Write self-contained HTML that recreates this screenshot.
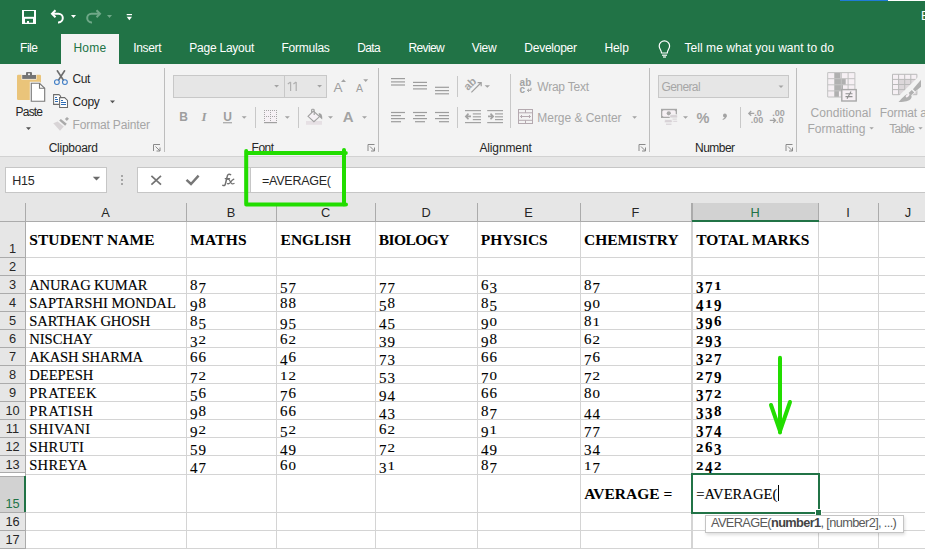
<!DOCTYPE html><html><head><meta charset="utf-8"><style>
html,body{margin:0;padding:0;width:925px;height:549px;overflow:hidden;background:#fff;position:relative}
.t{position:absolute;white-space:nowrap}
.r{position:absolute;box-sizing:content-box}
.d{display:inline-block;text-align:left}
</style></head><body>
<div class="r" style="left:0px;top:0px;width:925px;height:64px;background:#217346;"></div>
<div class="r" style="left:840px;top:0px;width:48px;height:1px;background:#1f7bd6;"></div>
<div class="r" style="left:888px;top:0px;width:37px;height:1px;background:#ffffff;"></div>
<div class="t" style="left:921.00px;top:8.84px;font-family:'Liberation Sans', sans-serif;font-size:12px;line-height:14px;color:#ffffff;font-weight:normal;">E</div>
<div class="r" style="left:61px;top:34px;width:58px;height:30px;background:#f3f3f3;"></div>
<div class="t" style="left:20.00px;top:41.34px;font-family:'Liberation Sans', sans-serif;font-size:12px;line-height:14px;color:#ffffff;font-weight:normal;letter-spacing:-0.440px;">File</div>
<div class="t" style="left:73.40px;top:41.34px;font-family:'Liberation Sans', sans-serif;font-size:12px;line-height:14px;color:#217346;font-weight:normal;letter-spacing:0.253px;">Home</div>
<div class="t" style="left:133.20px;top:41.34px;font-family:'Liberation Sans', sans-serif;font-size:12px;line-height:14px;color:#ffffff;font-weight:normal;letter-spacing:-0.320px;">Insert</div>
<div class="t" style="left:189.30px;top:41.34px;font-family:'Liberation Sans', sans-serif;font-size:12px;line-height:14px;color:#ffffff;font-weight:normal;letter-spacing:-0.238px;">Page Layout</div>
<div class="t" style="left:281.40px;top:41.34px;font-family:'Liberation Sans', sans-serif;font-size:12px;line-height:14px;color:#ffffff;font-weight:normal;letter-spacing:-0.220px;">Formulas</div>
<div class="t" style="left:357.20px;top:41.34px;font-family:'Liberation Sans', sans-serif;font-size:12px;line-height:14px;color:#ffffff;font-weight:normal;letter-spacing:-0.627px;">Data</div>
<div class="t" style="left:408.40px;top:41.34px;font-family:'Liberation Sans', sans-serif;font-size:12px;line-height:14px;color:#ffffff;font-weight:normal;letter-spacing:-0.612px;">Review</div>
<div class="t" style="left:471.70px;top:41.34px;font-family:'Liberation Sans', sans-serif;font-size:12px;line-height:14px;color:#ffffff;font-weight:normal;letter-spacing:-0.300px;">View</div>
<div class="t" style="left:524.30px;top:41.34px;font-family:'Liberation Sans', sans-serif;font-size:12px;line-height:14px;color:#ffffff;font-weight:normal;letter-spacing:-0.252px;">Developer</div>
<div class="t" style="left:604.50px;top:41.34px;font-family:'Liberation Sans', sans-serif;font-size:12px;line-height:14px;color:#ffffff;font-weight:normal;letter-spacing:-0.120px;">Help</div>
<div class="t" style="left:684.50px;top:41.34px;font-family:'Liberation Sans', sans-serif;font-size:12px;line-height:14px;color:#ffffff;font-weight:normal;letter-spacing:0.055px;">Tell me what you want to do</div>
<div class="r" style="left:0px;top:64px;width:925px;height:92px;background:#f3f3f3;"></div>
<div class="r" style="left:0px;top:156px;width:925px;height:47px;background:#e6e6e6;"></div>
<div class="r" style="left:0px;top:156px;width:925px;height:1px;background:#d2d2d2;"></div>
<div class="r" style="left:164px;top:68px;width:1px;height:84px;background:#bdbdbd;"></div>
<div class="r" style="left:378px;top:68px;width:1px;height:84px;background:#bdbdbd;"></div>
<div class="r" style="left:649px;top:68px;width:1px;height:84px;background:#bdbdbd;"></div>
<div class="r" style="left:796px;top:68px;width:1px;height:84px;background:#bdbdbd;"></div>
<div class="r" style="left:173px;top:75px;width:110px;height:21px;background:#e6e6e6;border:1px solid #c8c8c8"></div>
<div class="r" style="left:284px;top:75px;width:41px;height:21px;background:#e6e6e6;border:1px solid #c8c8c8"></div>
<div class="r" style="left:658px;top:75px;width:129px;height:21px;background:#e6e6e6;border:1px solid #c8c8c8"></div>
<div class="t" style="left:48.70px;top:140.84px;font-family:'Liberation Sans', sans-serif;font-size:12px;line-height:14px;color:#262626;font-weight:normal;letter-spacing:-0.258px;">Clipboard</div>
<div class="t" style="left:251.60px;top:140.84px;font-family:'Liberation Sans', sans-serif;font-size:12px;line-height:14px;color:#262626;font-weight:normal;letter-spacing:-0.533px;">Font</div>
<div class="t" style="left:479.40px;top:140.54px;font-family:'Liberation Sans', sans-serif;font-size:12px;line-height:14px;color:#262626;font-weight:normal;letter-spacing:-0.118px;">Alignment</div>
<div class="t" style="left:695.00px;top:140.54px;font-family:'Liberation Sans', sans-serif;font-size:12px;line-height:14px;color:#262626;font-weight:normal;letter-spacing:-0.532px;">Number</div>
<div class="t" style="left:15.60px;top:104.84px;font-family:'Liberation Sans', sans-serif;font-size:12px;line-height:14px;color:#262626;font-weight:normal;letter-spacing:-0.815px;">Paste</div>
<div class="t" style="left:72.60px;top:71.84px;font-family:'Liberation Sans', sans-serif;font-size:12px;line-height:14px;color:#262626;font-weight:normal;letter-spacing:-0.430px;">Cut</div>
<div class="t" style="left:72.60px;top:94.84px;font-family:'Liberation Sans', sans-serif;font-size:12px;line-height:14px;color:#262626;font-weight:normal;letter-spacing:-0.273px;">Copy</div>
<div class="t" style="left:72.60px;top:117.84px;font-family:'Liberation Sans', sans-serif;font-size:12px;line-height:14px;color:#a6a6a6;font-weight:normal;letter-spacing:-0.152px;">Format Painter</div>
<div class="t" style="left:537.30px;top:79.84px;font-family:'Liberation Sans', sans-serif;font-size:12px;line-height:14px;color:#a6a6a6;font-weight:normal;letter-spacing:-0.235px;">Wrap Text</div>
<div class="t" style="left:537.30px;top:110.84px;font-family:'Liberation Sans', sans-serif;font-size:12px;line-height:14px;color:#a6a6a6;font-weight:normal;letter-spacing:-0.032px;">Merge &amp; Center</div>
<div class="t" style="left:661.60px;top:79.84px;font-family:'Liberation Sans', sans-serif;font-size:12px;line-height:14px;color:#a6a6a6;font-weight:normal;letter-spacing:-0.620px;">General</div>
<div class="t" style="left:810.40px;top:106.14px;font-family:'Liberation Sans', sans-serif;font-size:12px;line-height:14px;color:#a6a6a6;font-weight:normal;letter-spacing:0.084px;">Conditional</div>
<div class="t" style="left:807.40px;top:121.84px;font-family:'Liberation Sans', sans-serif;font-size:12px;line-height:14px;color:#a6a6a6;font-weight:normal;letter-spacing:0.071px;">Formatting</div>
<div class="t" style="left:879.80px;top:106.14px;font-family:'Liberation Sans', sans-serif;font-size:12px;line-height:14px;color:#a6a6a6;font-weight:normal;letter-spacing:-0.123px;">Format a</div>
<div class="t" style="left:889.30px;top:121.84px;font-family:'Liberation Sans', sans-serif;font-size:12px;line-height:14px;color:#a6a6a6;font-weight:normal;letter-spacing:-0.770px;">Table</div>
<svg class="r" style="left:0;top:0" width="925" height="549"><path d="M290.6 82 V91 M287.8 84 L290.6 82 M296.2 82 V91 M293.4 84 L296.2 82" stroke="#b0b0b0" stroke-width="1.2" fill="none"/></svg>
<div class="r" style="left:5px;top:167px;width:100px;height:24px;background:#fff;border:1px solid #c6c6c6"></div>
<div class="t" style="left:12.20px;top:173.87px;font-family:'Liberation Sans', sans-serif;font-size:12.5px;line-height:15px;color:#262626;font-weight:normal;letter-spacing:-0.269px;">H15</div>
<div class="r" style="left:137px;top:167px;width:925px;height:24px;background:#fff;border:1px solid #c6c6c6"></div>
<div class="r" style="left:244px;top:168px;width:6px;height:24px;background:#e6e6e6;"></div>
<div class="r" style="left:250px;top:167px;width:1px;height:26px;background:#c6c6c6;"></div>
<div class="t" style="left:262.00px;top:173.67px;font-family:'Liberation Sans', sans-serif;font-size:12.5px;line-height:15px;color:#262626;font-weight:normal;letter-spacing:-0.250px;">=AVERAGE(</div>
<div class="r" style="left:0px;top:203px;width:925px;height:18px;background:#e6e6e6;"></div>
<div class="r" style="left:0px;top:221px;width:25px;height:328px;background:#e6e6e6;"></div>
<div class="r" style="left:26px;top:222px;width:899px;height:327px;background:#ffffff;"></div>
<div class="r" style="left:693px;top:203px;width:125px;height:17px;background:#d2d2d2;"></div>
<div class="r" style="left:0px;top:477px;width:24px;height:35px;background:#d2d2d2;"></div>
<div class="r" style="left:186px;top:222px;width:1px;height:327px;background:#d4d4d4;"></div>
<div class="r" style="left:276px;top:222px;width:1px;height:327px;background:#d4d4d4;"></div>
<div class="r" style="left:375px;top:222px;width:1px;height:327px;background:#d4d4d4;"></div>
<div class="r" style="left:477px;top:222px;width:1px;height:327px;background:#d4d4d4;"></div>
<div class="r" style="left:580px;top:222px;width:1px;height:327px;background:#d4d4d4;"></div>
<div class="r" style="left:692px;top:222px;width:1px;height:327px;background:#d4d4d4;"></div>
<div class="r" style="left:818px;top:222px;width:1px;height:327px;background:#d4d4d4;"></div>
<div class="r" style="left:878px;top:222px;width:1px;height:327px;background:#d4d4d4;"></div>
<div class="r" style="left:691px;top:222px;width:1px;height:327px;background:#d4d4d4;"></div>
<div class="r" style="left:26px;top:257px;width:899px;height:1px;background:#d4d4d4;"></div>
<div class="r" style="left:26px;top:275px;width:899px;height:1px;background:#d4d4d4;"></div>
<div class="r" style="left:26px;top:293px;width:899px;height:1px;background:#d4d4d4;"></div>
<div class="r" style="left:26px;top:311px;width:899px;height:1px;background:#d4d4d4;"></div>
<div class="r" style="left:26px;top:329px;width:899px;height:1px;background:#d4d4d4;"></div>
<div class="r" style="left:26px;top:347px;width:899px;height:1px;background:#d4d4d4;"></div>
<div class="r" style="left:26px;top:365px;width:899px;height:1px;background:#d4d4d4;"></div>
<div class="r" style="left:26px;top:383px;width:899px;height:1px;background:#d4d4d4;"></div>
<div class="r" style="left:26px;top:401px;width:899px;height:1px;background:#d4d4d4;"></div>
<div class="r" style="left:26px;top:419px;width:899px;height:1px;background:#d4d4d4;"></div>
<div class="r" style="left:26px;top:437px;width:899px;height:1px;background:#d4d4d4;"></div>
<div class="r" style="left:26px;top:455px;width:899px;height:1px;background:#d4d4d4;"></div>
<div class="r" style="left:26px;top:474px;width:899px;height:1px;background:#d4d4d4;"></div>
<div class="r" style="left:26px;top:512px;width:899px;height:1px;background:#d4d4d4;"></div>
<div class="r" style="left:26px;top:530px;width:899px;height:1px;background:#d4d4d4;"></div>
<div class="r" style="left:26px;top:548px;width:899px;height:1px;background:#d4d4d4;"></div>
<div class="r" style="left:25px;top:203px;width:1px;height:18px;background:#ababab;"></div>
<div class="r" style="left:186px;top:203px;width:1px;height:18px;background:#ababab;"></div>
<div class="r" style="left:276px;top:203px;width:1px;height:18px;background:#ababab;"></div>
<div class="r" style="left:375px;top:203px;width:1px;height:18px;background:#ababab;"></div>
<div class="r" style="left:477px;top:203px;width:1px;height:18px;background:#ababab;"></div>
<div class="r" style="left:580px;top:203px;width:1px;height:18px;background:#ababab;"></div>
<div class="r" style="left:692px;top:203px;width:1px;height:18px;background:#ababab;"></div>
<div class="r" style="left:818px;top:203px;width:1px;height:18px;background:#ababab;"></div>
<div class="r" style="left:878px;top:203px;width:1px;height:18px;background:#ababab;"></div>
<div class="r" style="left:691px;top:203px;width:1px;height:18px;background:#ababab;"></div>
<div class="r" style="left:0px;top:221px;width:925px;height:1px;background:#ababab;"></div>
<div class="r" style="left:25px;top:221px;width:1px;height:328px;background:#ababab;"></div>
<div class="r" style="left:0px;top:257px;width:25px;height:1px;background:#ababab;"></div>
<div class="r" style="left:0px;top:275px;width:25px;height:1px;background:#ababab;"></div>
<div class="r" style="left:0px;top:293px;width:25px;height:1px;background:#ababab;"></div>
<div class="r" style="left:0px;top:311px;width:25px;height:1px;background:#ababab;"></div>
<div class="r" style="left:0px;top:329px;width:25px;height:1px;background:#ababab;"></div>
<div class="r" style="left:0px;top:347px;width:25px;height:1px;background:#ababab;"></div>
<div class="r" style="left:0px;top:365px;width:25px;height:1px;background:#ababab;"></div>
<div class="r" style="left:0px;top:383px;width:25px;height:1px;background:#ababab;"></div>
<div class="r" style="left:0px;top:401px;width:25px;height:1px;background:#ababab;"></div>
<div class="r" style="left:0px;top:419px;width:25px;height:1px;background:#ababab;"></div>
<div class="r" style="left:0px;top:437px;width:25px;height:1px;background:#ababab;"></div>
<div class="r" style="left:0px;top:455px;width:25px;height:1px;background:#ababab;"></div>
<div class="r" style="left:0px;top:472px;width:25px;height:1px;background:#ababab;"></div>
<div class="r" style="left:0px;top:473px;width:25px;height:3px;background:#ffffff;"></div>
<div class="r" style="left:0px;top:476px;width:25px;height:1px;background:#ababab;"></div>
<div class="r" style="left:0px;top:512px;width:25px;height:1px;background:#ababab;"></div>
<div class="r" style="left:0px;top:530px;width:25px;height:1px;background:#ababab;"></div>
<div class="r" style="left:0px;top:548px;width:25px;height:1px;background:#ababab;"></div>
<div class="r" style="left:24px;top:476px;width:2px;height:36px;background:#217346;"></div>
<div class="r" style="left:692px;top:220px;width:127px;height:2px;background:#217346;"></div>
<div class="t" style="left:25.00px;top:205.06px;font-family:'Liberation Sans', sans-serif;font-size:12.8px;line-height:15px;color:#262626;font-weight:normal;"><span style="display:inline-block;width:161px;text-align:center">A</span></div>
<div class="t" style="left:186.00px;top:205.06px;font-family:'Liberation Sans', sans-serif;font-size:12.8px;line-height:15px;color:#262626;font-weight:normal;"><span style="display:inline-block;width:90px;text-align:center">B</span></div>
<div class="t" style="left:276.00px;top:205.06px;font-family:'Liberation Sans', sans-serif;font-size:12.8px;line-height:15px;color:#262626;font-weight:normal;"><span style="display:inline-block;width:99px;text-align:center">C</span></div>
<div class="t" style="left:375.00px;top:205.06px;font-family:'Liberation Sans', sans-serif;font-size:12.8px;line-height:15px;color:#262626;font-weight:normal;"><span style="display:inline-block;width:102px;text-align:center">D</span></div>
<div class="t" style="left:477.00px;top:205.06px;font-family:'Liberation Sans', sans-serif;font-size:12.8px;line-height:15px;color:#262626;font-weight:normal;"><span style="display:inline-block;width:103px;text-align:center">E</span></div>
<div class="t" style="left:580.00px;top:205.06px;font-family:'Liberation Sans', sans-serif;font-size:12.8px;line-height:15px;color:#262626;font-weight:normal;"><span style="display:inline-block;width:111px;text-align:center">F</span></div>
<div class="t" style="left:692.00px;top:205.06px;font-family:'Liberation Sans', sans-serif;font-size:12.8px;line-height:15px;color:#217346;font-weight:normal;"><span style="display:inline-block;width:126px;text-align:center">H</span></div>
<div class="t" style="left:818.00px;top:205.06px;font-family:'Liberation Sans', sans-serif;font-size:12.8px;line-height:15px;color:#262626;font-weight:normal;"><span style="display:inline-block;width:60px;text-align:center">I</span></div>
<div class="t" style="left:878.00px;top:205.06px;font-family:'Liberation Sans', sans-serif;font-size:12.8px;line-height:15px;color:#262626;font-weight:normal;"><span style="display:inline-block;width:60px;text-align:center">J</span></div>
<div class="t" style="left:0.00px;top:241.06px;font-family:'Liberation Sans', sans-serif;font-size:12.8px;line-height:15px;color:#262626;font-weight:normal;"><span style="display:inline-block;width:25px;text-align:center">1</span></div>
<div class="t" style="left:0.00px;top:259.06px;font-family:'Liberation Sans', sans-serif;font-size:12.8px;line-height:15px;color:#262626;font-weight:normal;"><span style="display:inline-block;width:25px;text-align:center">2</span></div>
<div class="t" style="left:0.00px;top:277.06px;font-family:'Liberation Sans', sans-serif;font-size:12.8px;line-height:15px;color:#262626;font-weight:normal;"><span style="display:inline-block;width:25px;text-align:center">3</span></div>
<div class="t" style="left:0.00px;top:295.06px;font-family:'Liberation Sans', sans-serif;font-size:12.8px;line-height:15px;color:#262626;font-weight:normal;"><span style="display:inline-block;width:25px;text-align:center">4</span></div>
<div class="t" style="left:0.00px;top:313.06px;font-family:'Liberation Sans', sans-serif;font-size:12.8px;line-height:15px;color:#262626;font-weight:normal;"><span style="display:inline-block;width:25px;text-align:center">5</span></div>
<div class="t" style="left:0.00px;top:331.06px;font-family:'Liberation Sans', sans-serif;font-size:12.8px;line-height:15px;color:#262626;font-weight:normal;"><span style="display:inline-block;width:25px;text-align:center">6</span></div>
<div class="t" style="left:0.00px;top:349.06px;font-family:'Liberation Sans', sans-serif;font-size:12.8px;line-height:15px;color:#262626;font-weight:normal;"><span style="display:inline-block;width:25px;text-align:center">7</span></div>
<div class="t" style="left:0.00px;top:367.06px;font-family:'Liberation Sans', sans-serif;font-size:12.8px;line-height:15px;color:#262626;font-weight:normal;"><span style="display:inline-block;width:25px;text-align:center">8</span></div>
<div class="t" style="left:0.00px;top:385.06px;font-family:'Liberation Sans', sans-serif;font-size:12.8px;line-height:15px;color:#262626;font-weight:normal;"><span style="display:inline-block;width:25px;text-align:center">9</span></div>
<div class="t" style="left:0.00px;top:403.06px;font-family:'Liberation Sans', sans-serif;font-size:12.8px;line-height:15px;color:#262626;font-weight:normal;"><span style="display:inline-block;width:25px;text-align:center">10</span></div>
<div class="t" style="left:0.00px;top:421.06px;font-family:'Liberation Sans', sans-serif;font-size:12.8px;line-height:15px;color:#262626;font-weight:normal;"><span style="display:inline-block;width:25px;text-align:center">11</span></div>
<div class="t" style="left:0.00px;top:439.06px;font-family:'Liberation Sans', sans-serif;font-size:12.8px;line-height:15px;color:#262626;font-weight:normal;"><span style="display:inline-block;width:25px;text-align:center">12</span></div>
<div class="t" style="left:0.00px;top:457.06px;font-family:'Liberation Sans', sans-serif;font-size:12.8px;line-height:15px;color:#262626;font-weight:normal;"><span style="display:inline-block;width:25px;text-align:center">13</span></div>
<div class="t" style="left:0.00px;top:496.06px;font-family:'Liberation Sans', sans-serif;font-size:12.8px;line-height:15px;color:#217346;font-weight:normal;"><span style="display:inline-block;width:25px;text-align:center">15</span></div>
<div class="t" style="left:0.00px;top:514.06px;font-family:'Liberation Sans', sans-serif;font-size:12.8px;line-height:15px;color:#262626;font-weight:normal;"><span style="display:inline-block;width:25px;text-align:center">16</span></div>
<div class="t" style="left:0.00px;top:532.06px;font-family:'Liberation Sans', sans-serif;font-size:12.8px;line-height:15px;color:#262626;font-weight:normal;"><span style="display:inline-block;width:25px;text-align:center">17</span></div>
<div class="t" style="left:29.20px;top:230.47px;font-family:'Liberation Serif', serif;font-size:15.5px;line-height:19px;color:#000;font-weight:bold;letter-spacing:0.113px;">STUDENT NAME</div>
<div class="t" style="left:190.30px;top:230.47px;font-family:'Liberation Serif', serif;font-size:15.5px;line-height:19px;color:#000;font-weight:bold;letter-spacing:0.169px;">MATHS</div>
<div class="t" style="left:280.60px;top:230.47px;font-family:'Liberation Serif', serif;font-size:15.5px;line-height:19px;color:#000;font-weight:bold;letter-spacing:-0.034px;">ENGLISH</div>
<div class="t" style="left:378.70px;top:230.47px;font-family:'Liberation Serif', serif;font-size:15.5px;line-height:19px;color:#000;font-weight:bold;letter-spacing:-0.565px;">BIOLOGY</div>
<div class="t" style="left:480.80px;top:230.47px;font-family:'Liberation Serif', serif;font-size:15.5px;line-height:19px;color:#000;font-weight:bold;letter-spacing:-0.049px;">PHYSICS</div>
<div class="t" style="left:584.10px;top:230.47px;font-family:'Liberation Serif', serif;font-size:15.5px;line-height:19px;color:#000;font-weight:bold;letter-spacing:-0.064px;">CHEMISTRY</div>
<div class="t" style="left:696.30px;top:230.47px;font-family:'Liberation Serif', serif;font-size:15.5px;line-height:19px;color:#000;font-weight:bold;letter-spacing:-0.054px;">TOTAL MARKS</div>
<div class="t" style="left:29.20px;top:275.57px;font-family:'Liberation Serif', serif;font-size:14.6px;line-height:18px;color:#000;font-weight:normal;letter-spacing:-0.184px;-webkit-text-stroke:0.12px #000">ANURAG KUMAR</div>
<div class="t" style="left:190px;top:276.24px;font-family:'Liberation Serif', serif;font-size:15.0px;line-height:18px;color:#000;font-weight:normal;-webkit-text-stroke:0.12px #000"><span class="d" style="width:8.5px;transform:none;transform-origin:50% 14.06px">8</span><span class="d" style="width:8.5px;transform:translateY(3px) scaleY(1.0);transform-origin:50% 14.06px">7</span></div>
<div class="t" style="left:280px;top:276.24px;font-family:'Liberation Serif', serif;font-size:15.0px;line-height:18px;color:#000;font-weight:normal;-webkit-text-stroke:0.12px #000"><span class="d" style="width:8.5px;transform:translateY(3px) scaleY(1.0);transform-origin:50% 14.06px">5</span><span class="d" style="width:8.5px;transform:translateY(3px) scaleY(1.0);transform-origin:50% 14.06px">7</span></div>
<div class="t" style="left:379px;top:276.24px;font-family:'Liberation Serif', serif;font-size:15.0px;line-height:18px;color:#000;font-weight:normal;-webkit-text-stroke:0.12px #000"><span class="d" style="width:8.5px;transform:translateY(3px) scaleY(1.0);transform-origin:50% 14.06px">7</span><span class="d" style="width:8.5px;transform:translateY(3px) scaleY(1.0);transform-origin:50% 14.06px">7</span></div>
<div class="t" style="left:481px;top:276.24px;font-family:'Liberation Serif', serif;font-size:15.0px;line-height:18px;color:#000;font-weight:normal;-webkit-text-stroke:0.12px #000"><span class="d" style="width:8.5px;transform:none;transform-origin:50% 14.06px">6</span><span class="d" style="width:8.5px;transform:translateY(3px) scaleY(1.0);transform-origin:50% 14.06px">3</span></div>
<div class="t" style="left:584px;top:276.24px;font-family:'Liberation Serif', serif;font-size:15.0px;line-height:18px;color:#000;font-weight:normal;-webkit-text-stroke:0.12px #000"><span class="d" style="width:8.5px;transform:none;transform-origin:50% 14.06px">8</span><span class="d" style="width:8.5px;transform:translateY(3px) scaleY(1.0);transform-origin:50% 14.06px">7</span></div>
<div class="t" style="left:696px;top:276.24px;font-family:'Liberation Serif', serif;font-size:15.0px;line-height:18px;color:#000;font-weight:bold;"><span class="d" style="width:9.0px;transform:translateY(3px) scaleY(1.09);transform-origin:50% 14.06px">3</span><span class="d" style="width:9.0px;transform:translateY(3px) scaleY(1.09);transform-origin:50% 14.06px">7</span><span class="d" style="width:9.0px;transform:scaleY(0.8);transform-origin:50% 14.06px">1</span></div>
<div class="t" style="left:29.20px;top:293.57px;font-family:'Liberation Serif', serif;font-size:14.6px;line-height:18px;color:#000;font-weight:normal;letter-spacing:0.042px;-webkit-text-stroke:0.12px #000">SAPTARSHI MONDAL</div>
<div class="t" style="left:190px;top:294.24px;font-family:'Liberation Serif', serif;font-size:15.0px;line-height:18px;color:#000;font-weight:normal;-webkit-text-stroke:0.12px #000"><span class="d" style="width:8.5px;transform:translateY(3px) scaleY(1.0);transform-origin:50% 14.06px">9</span><span class="d" style="width:8.5px;transform:none;transform-origin:50% 14.06px">8</span></div>
<div class="t" style="left:280px;top:294.24px;font-family:'Liberation Serif', serif;font-size:15.0px;line-height:18px;color:#000;font-weight:normal;-webkit-text-stroke:0.12px #000"><span class="d" style="width:8.5px;transform:none;transform-origin:50% 14.06px">8</span><span class="d" style="width:8.5px;transform:none;transform-origin:50% 14.06px">8</span></div>
<div class="t" style="left:379px;top:294.24px;font-family:'Liberation Serif', serif;font-size:15.0px;line-height:18px;color:#000;font-weight:normal;-webkit-text-stroke:0.12px #000"><span class="d" style="width:8.5px;transform:translateY(3px) scaleY(1.0);transform-origin:50% 14.06px">5</span><span class="d" style="width:8.5px;transform:none;transform-origin:50% 14.06px">8</span></div>
<div class="t" style="left:481px;top:294.24px;font-family:'Liberation Serif', serif;font-size:15.0px;line-height:18px;color:#000;font-weight:normal;-webkit-text-stroke:0.12px #000"><span class="d" style="width:8.5px;transform:none;transform-origin:50% 14.06px">8</span><span class="d" style="width:8.5px;transform:translateY(3px) scaleY(1.0);transform-origin:50% 14.06px">5</span></div>
<div class="t" style="left:584px;top:294.24px;font-family:'Liberation Serif', serif;font-size:15.0px;line-height:18px;color:#000;font-weight:normal;-webkit-text-stroke:0.12px #000"><span class="d" style="width:8.5px;transform:translateY(3px) scaleY(1.0);transform-origin:50% 14.06px">9</span><span class="d" style="width:8.5px;transform:scaleY(0.8);transform-origin:50% 14.06px">0</span></div>
<div class="t" style="left:696px;top:294.24px;font-family:'Liberation Serif', serif;font-size:15.0px;line-height:18px;color:#000;font-weight:bold;"><span class="d" style="width:9.0px;transform:translateY(3px) scaleY(1.09);transform-origin:50% 14.06px">4</span><span class="d" style="width:9.0px;transform:scaleY(0.8);transform-origin:50% 14.06px">1</span><span class="d" style="width:9.0px;transform:translateY(3px) scaleY(1.09);transform-origin:50% 14.06px">9</span></div>
<div class="t" style="left:29.20px;top:311.57px;font-family:'Liberation Serif', serif;font-size:14.6px;line-height:18px;color:#000;font-weight:normal;letter-spacing:-0.063px;-webkit-text-stroke:0.12px #000">SARTHAK GHOSH</div>
<div class="t" style="left:190px;top:312.24px;font-family:'Liberation Serif', serif;font-size:15.0px;line-height:18px;color:#000;font-weight:normal;-webkit-text-stroke:0.12px #000"><span class="d" style="width:8.5px;transform:none;transform-origin:50% 14.06px">8</span><span class="d" style="width:8.5px;transform:translateY(3px) scaleY(1.0);transform-origin:50% 14.06px">5</span></div>
<div class="t" style="left:280px;top:312.24px;font-family:'Liberation Serif', serif;font-size:15.0px;line-height:18px;color:#000;font-weight:normal;-webkit-text-stroke:0.12px #000"><span class="d" style="width:8.5px;transform:translateY(3px) scaleY(1.0);transform-origin:50% 14.06px">9</span><span class="d" style="width:8.5px;transform:translateY(3px) scaleY(1.0);transform-origin:50% 14.06px">5</span></div>
<div class="t" style="left:379px;top:312.24px;font-family:'Liberation Serif', serif;font-size:15.0px;line-height:18px;color:#000;font-weight:normal;-webkit-text-stroke:0.12px #000"><span class="d" style="width:8.5px;transform:translateY(3px) scaleY(1.0);transform-origin:50% 14.06px">4</span><span class="d" style="width:8.5px;transform:translateY(3px) scaleY(1.0);transform-origin:50% 14.06px">5</span></div>
<div class="t" style="left:481px;top:312.24px;font-family:'Liberation Serif', serif;font-size:15.0px;line-height:18px;color:#000;font-weight:normal;-webkit-text-stroke:0.12px #000"><span class="d" style="width:8.5px;transform:translateY(3px) scaleY(1.0);transform-origin:50% 14.06px">9</span><span class="d" style="width:8.5px;transform:scaleY(0.8);transform-origin:50% 14.06px">0</span></div>
<div class="t" style="left:584px;top:312.24px;font-family:'Liberation Serif', serif;font-size:15.0px;line-height:18px;color:#000;font-weight:normal;-webkit-text-stroke:0.12px #000"><span class="d" style="width:8.5px;transform:none;transform-origin:50% 14.06px">8</span><span class="d" style="width:8.5px;transform:scaleY(0.8);transform-origin:50% 14.06px">1</span></div>
<div class="t" style="left:696px;top:312.24px;font-family:'Liberation Serif', serif;font-size:15.0px;line-height:18px;color:#000;font-weight:bold;"><span class="d" style="width:9.0px;transform:translateY(3px) scaleY(1.09);transform-origin:50% 14.06px">3</span><span class="d" style="width:9.0px;transform:translateY(3px) scaleY(1.09);transform-origin:50% 14.06px">9</span><span class="d" style="width:9.0px;transform:none;transform-origin:50% 14.06px">6</span></div>
<div class="t" style="left:29.20px;top:329.57px;font-family:'Liberation Serif', serif;font-size:14.6px;line-height:18px;color:#000;font-weight:normal;letter-spacing:0.003px;-webkit-text-stroke:0.12px #000">NISCHAY</div>
<div class="t" style="left:190px;top:330.24px;font-family:'Liberation Serif', serif;font-size:15.0px;line-height:18px;color:#000;font-weight:normal;-webkit-text-stroke:0.12px #000"><span class="d" style="width:8.5px;transform:translateY(3px) scaleY(1.0);transform-origin:50% 14.06px">3</span><span class="d" style="width:8.5px;transform:scaleY(0.8);transform-origin:50% 14.06px">2</span></div>
<div class="t" style="left:280px;top:330.24px;font-family:'Liberation Serif', serif;font-size:15.0px;line-height:18px;color:#000;font-weight:normal;-webkit-text-stroke:0.12px #000"><span class="d" style="width:8.5px;transform:none;transform-origin:50% 14.06px">6</span><span class="d" style="width:8.5px;transform:scaleY(0.8);transform-origin:50% 14.06px">2</span></div>
<div class="t" style="left:379px;top:330.24px;font-family:'Liberation Serif', serif;font-size:15.0px;line-height:18px;color:#000;font-weight:normal;-webkit-text-stroke:0.12px #000"><span class="d" style="width:8.5px;transform:translateY(3px) scaleY(1.0);transform-origin:50% 14.06px">3</span><span class="d" style="width:8.5px;transform:translateY(3px) scaleY(1.0);transform-origin:50% 14.06px">9</span></div>
<div class="t" style="left:481px;top:330.24px;font-family:'Liberation Serif', serif;font-size:15.0px;line-height:18px;color:#000;font-weight:normal;-webkit-text-stroke:0.12px #000"><span class="d" style="width:8.5px;transform:translateY(3px) scaleY(1.0);transform-origin:50% 14.06px">9</span><span class="d" style="width:8.5px;transform:none;transform-origin:50% 14.06px">8</span></div>
<div class="t" style="left:584px;top:330.24px;font-family:'Liberation Serif', serif;font-size:15.0px;line-height:18px;color:#000;font-weight:normal;-webkit-text-stroke:0.12px #000"><span class="d" style="width:8.5px;transform:none;transform-origin:50% 14.06px">6</span><span class="d" style="width:8.5px;transform:scaleY(0.8);transform-origin:50% 14.06px">2</span></div>
<div class="t" style="left:696px;top:330.24px;font-family:'Liberation Serif', serif;font-size:15.0px;line-height:18px;color:#000;font-weight:bold;"><span class="d" style="width:9.0px;transform:scaleY(0.8);transform-origin:50% 14.06px">2</span><span class="d" style="width:9.0px;transform:translateY(3px) scaleY(1.09);transform-origin:50% 14.06px">9</span><span class="d" style="width:9.0px;transform:translateY(3px) scaleY(1.09);transform-origin:50% 14.06px">3</span></div>
<div class="t" style="left:29.20px;top:347.57px;font-family:'Liberation Serif', serif;font-size:14.6px;line-height:18px;color:#000;font-weight:normal;letter-spacing:-0.230px;-webkit-text-stroke:0.12px #000">AKASH SHARMA</div>
<div class="t" style="left:190px;top:348.24px;font-family:'Liberation Serif', serif;font-size:15.0px;line-height:18px;color:#000;font-weight:normal;-webkit-text-stroke:0.12px #000"><span class="d" style="width:8.5px;transform:none;transform-origin:50% 14.06px">6</span><span class="d" style="width:8.5px;transform:none;transform-origin:50% 14.06px">6</span></div>
<div class="t" style="left:280px;top:348.24px;font-family:'Liberation Serif', serif;font-size:15.0px;line-height:18px;color:#000;font-weight:normal;-webkit-text-stroke:0.12px #000"><span class="d" style="width:8.5px;transform:translateY(3px) scaleY(1.0);transform-origin:50% 14.06px">4</span><span class="d" style="width:8.5px;transform:none;transform-origin:50% 14.06px">6</span></div>
<div class="t" style="left:379px;top:348.24px;font-family:'Liberation Serif', serif;font-size:15.0px;line-height:18px;color:#000;font-weight:normal;-webkit-text-stroke:0.12px #000"><span class="d" style="width:8.5px;transform:translateY(3px) scaleY(1.0);transform-origin:50% 14.06px">7</span><span class="d" style="width:8.5px;transform:translateY(3px) scaleY(1.0);transform-origin:50% 14.06px">3</span></div>
<div class="t" style="left:481px;top:348.24px;font-family:'Liberation Serif', serif;font-size:15.0px;line-height:18px;color:#000;font-weight:normal;-webkit-text-stroke:0.12px #000"><span class="d" style="width:8.5px;transform:none;transform-origin:50% 14.06px">6</span><span class="d" style="width:8.5px;transform:none;transform-origin:50% 14.06px">6</span></div>
<div class="t" style="left:584px;top:348.24px;font-family:'Liberation Serif', serif;font-size:15.0px;line-height:18px;color:#000;font-weight:normal;-webkit-text-stroke:0.12px #000"><span class="d" style="width:8.5px;transform:translateY(3px) scaleY(1.0);transform-origin:50% 14.06px">7</span><span class="d" style="width:8.5px;transform:none;transform-origin:50% 14.06px">6</span></div>
<div class="t" style="left:696px;top:348.24px;font-family:'Liberation Serif', serif;font-size:15.0px;line-height:18px;color:#000;font-weight:bold;"><span class="d" style="width:9.0px;transform:translateY(3px) scaleY(1.09);transform-origin:50% 14.06px">3</span><span class="d" style="width:9.0px;transform:scaleY(0.8);transform-origin:50% 14.06px">2</span><span class="d" style="width:9.0px;transform:translateY(3px) scaleY(1.09);transform-origin:50% 14.06px">7</span></div>
<div class="t" style="left:29.20px;top:365.57px;font-family:'Liberation Serif', serif;font-size:14.6px;line-height:18px;color:#000;font-weight:normal;letter-spacing:0.018px;-webkit-text-stroke:0.12px #000">DEEPESH</div>
<div class="t" style="left:190px;top:366.24px;font-family:'Liberation Serif', serif;font-size:15.0px;line-height:18px;color:#000;font-weight:normal;-webkit-text-stroke:0.12px #000"><span class="d" style="width:8.5px;transform:translateY(3px) scaleY(1.0);transform-origin:50% 14.06px">7</span><span class="d" style="width:8.5px;transform:scaleY(0.8);transform-origin:50% 14.06px">2</span></div>
<div class="t" style="left:280px;top:366.24px;font-family:'Liberation Serif', serif;font-size:15.0px;line-height:18px;color:#000;font-weight:normal;-webkit-text-stroke:0.12px #000"><span class="d" style="width:8.5px;transform:scaleY(0.8);transform-origin:50% 14.06px">1</span><span class="d" style="width:8.5px;transform:scaleY(0.8);transform-origin:50% 14.06px">2</span></div>
<div class="t" style="left:379px;top:366.24px;font-family:'Liberation Serif', serif;font-size:15.0px;line-height:18px;color:#000;font-weight:normal;-webkit-text-stroke:0.12px #000"><span class="d" style="width:8.5px;transform:translateY(3px) scaleY(1.0);transform-origin:50% 14.06px">5</span><span class="d" style="width:8.5px;transform:translateY(3px) scaleY(1.0);transform-origin:50% 14.06px">3</span></div>
<div class="t" style="left:481px;top:366.24px;font-family:'Liberation Serif', serif;font-size:15.0px;line-height:18px;color:#000;font-weight:normal;-webkit-text-stroke:0.12px #000"><span class="d" style="width:8.5px;transform:translateY(3px) scaleY(1.0);transform-origin:50% 14.06px">7</span><span class="d" style="width:8.5px;transform:scaleY(0.8);transform-origin:50% 14.06px">0</span></div>
<div class="t" style="left:584px;top:366.24px;font-family:'Liberation Serif', serif;font-size:15.0px;line-height:18px;color:#000;font-weight:normal;-webkit-text-stroke:0.12px #000"><span class="d" style="width:8.5px;transform:translateY(3px) scaleY(1.0);transform-origin:50% 14.06px">7</span><span class="d" style="width:8.5px;transform:scaleY(0.8);transform-origin:50% 14.06px">2</span></div>
<div class="t" style="left:696px;top:366.24px;font-family:'Liberation Serif', serif;font-size:15.0px;line-height:18px;color:#000;font-weight:bold;"><span class="d" style="width:9.0px;transform:scaleY(0.8);transform-origin:50% 14.06px">2</span><span class="d" style="width:9.0px;transform:translateY(3px) scaleY(1.09);transform-origin:50% 14.06px">7</span><span class="d" style="width:9.0px;transform:translateY(3px) scaleY(1.09);transform-origin:50% 14.06px">9</span></div>
<div class="t" style="left:29.20px;top:383.57px;font-family:'Liberation Serif', serif;font-size:14.6px;line-height:18px;color:#000;font-weight:normal;letter-spacing:0.551px;-webkit-text-stroke:0.12px #000">PRATEEK</div>
<div class="t" style="left:190px;top:384.24px;font-family:'Liberation Serif', serif;font-size:15.0px;line-height:18px;color:#000;font-weight:normal;-webkit-text-stroke:0.12px #000"><span class="d" style="width:8.5px;transform:translateY(3px) scaleY(1.0);transform-origin:50% 14.06px">5</span><span class="d" style="width:8.5px;transform:none;transform-origin:50% 14.06px">6</span></div>
<div class="t" style="left:280px;top:384.24px;font-family:'Liberation Serif', serif;font-size:15.0px;line-height:18px;color:#000;font-weight:normal;-webkit-text-stroke:0.12px #000"><span class="d" style="width:8.5px;transform:translateY(3px) scaleY(1.0);transform-origin:50% 14.06px">7</span><span class="d" style="width:8.5px;transform:none;transform-origin:50% 14.06px">6</span></div>
<div class="t" style="left:379px;top:384.24px;font-family:'Liberation Serif', serif;font-size:15.0px;line-height:18px;color:#000;font-weight:normal;-webkit-text-stroke:0.12px #000"><span class="d" style="width:8.5px;transform:translateY(3px) scaleY(1.0);transform-origin:50% 14.06px">9</span><span class="d" style="width:8.5px;transform:translateY(3px) scaleY(1.0);transform-origin:50% 14.06px">4</span></div>
<div class="t" style="left:481px;top:384.24px;font-family:'Liberation Serif', serif;font-size:15.0px;line-height:18px;color:#000;font-weight:normal;-webkit-text-stroke:0.12px #000"><span class="d" style="width:8.5px;transform:none;transform-origin:50% 14.06px">6</span><span class="d" style="width:8.5px;transform:none;transform-origin:50% 14.06px">6</span></div>
<div class="t" style="left:584px;top:384.24px;font-family:'Liberation Serif', serif;font-size:15.0px;line-height:18px;color:#000;font-weight:normal;-webkit-text-stroke:0.12px #000"><span class="d" style="width:8.5px;transform:none;transform-origin:50% 14.06px">8</span><span class="d" style="width:8.5px;transform:scaleY(0.8);transform-origin:50% 14.06px">0</span></div>
<div class="t" style="left:696px;top:384.24px;font-family:'Liberation Serif', serif;font-size:15.0px;line-height:18px;color:#000;font-weight:bold;"><span class="d" style="width:9.0px;transform:translateY(3px) scaleY(1.09);transform-origin:50% 14.06px">3</span><span class="d" style="width:9.0px;transform:translateY(3px) scaleY(1.09);transform-origin:50% 14.06px">7</span><span class="d" style="width:9.0px;transform:scaleY(0.8);transform-origin:50% 14.06px">2</span></div>
<div class="t" style="left:29.20px;top:401.57px;font-family:'Liberation Serif', serif;font-size:14.6px;line-height:18px;color:#000;font-weight:normal;letter-spacing:0.733px;-webkit-text-stroke:0.12px #000">PRATISH</div>
<div class="t" style="left:190px;top:402.24px;font-family:'Liberation Serif', serif;font-size:15.0px;line-height:18px;color:#000;font-weight:normal;-webkit-text-stroke:0.12px #000"><span class="d" style="width:8.5px;transform:translateY(3px) scaleY(1.0);transform-origin:50% 14.06px">9</span><span class="d" style="width:8.5px;transform:none;transform-origin:50% 14.06px">8</span></div>
<div class="t" style="left:280px;top:402.24px;font-family:'Liberation Serif', serif;font-size:15.0px;line-height:18px;color:#000;font-weight:normal;-webkit-text-stroke:0.12px #000"><span class="d" style="width:8.5px;transform:none;transform-origin:50% 14.06px">6</span><span class="d" style="width:8.5px;transform:none;transform-origin:50% 14.06px">6</span></div>
<div class="t" style="left:379px;top:402.24px;font-family:'Liberation Serif', serif;font-size:15.0px;line-height:18px;color:#000;font-weight:normal;-webkit-text-stroke:0.12px #000"><span class="d" style="width:8.5px;transform:translateY(3px) scaleY(1.0);transform-origin:50% 14.06px">4</span><span class="d" style="width:8.5px;transform:translateY(3px) scaleY(1.0);transform-origin:50% 14.06px">3</span></div>
<div class="t" style="left:481px;top:402.24px;font-family:'Liberation Serif', serif;font-size:15.0px;line-height:18px;color:#000;font-weight:normal;-webkit-text-stroke:0.12px #000"><span class="d" style="width:8.5px;transform:none;transform-origin:50% 14.06px">8</span><span class="d" style="width:8.5px;transform:translateY(3px) scaleY(1.0);transform-origin:50% 14.06px">7</span></div>
<div class="t" style="left:584px;top:402.24px;font-family:'Liberation Serif', serif;font-size:15.0px;line-height:18px;color:#000;font-weight:normal;-webkit-text-stroke:0.12px #000"><span class="d" style="width:8.5px;transform:translateY(3px) scaleY(1.0);transform-origin:50% 14.06px">4</span><span class="d" style="width:8.5px;transform:translateY(3px) scaleY(1.0);transform-origin:50% 14.06px">4</span></div>
<div class="t" style="left:696px;top:402.24px;font-family:'Liberation Serif', serif;font-size:15.0px;line-height:18px;color:#000;font-weight:bold;"><span class="d" style="width:9.0px;transform:translateY(3px) scaleY(1.09);transform-origin:50% 14.06px">3</span><span class="d" style="width:9.0px;transform:translateY(3px) scaleY(1.09);transform-origin:50% 14.06px">3</span><span class="d" style="width:9.0px;transform:none;transform-origin:50% 14.06px">8</span></div>
<div class="t" style="left:29.20px;top:419.57px;font-family:'Liberation Serif', serif;font-size:14.6px;line-height:18px;color:#000;font-weight:normal;letter-spacing:0.465px;-webkit-text-stroke:0.12px #000">SHIVANI</div>
<div class="t" style="left:190px;top:420.24px;font-family:'Liberation Serif', serif;font-size:15.0px;line-height:18px;color:#000;font-weight:normal;-webkit-text-stroke:0.12px #000"><span class="d" style="width:8.5px;transform:translateY(3px) scaleY(1.0);transform-origin:50% 14.06px">9</span><span class="d" style="width:8.5px;transform:scaleY(0.8);transform-origin:50% 14.06px">2</span></div>
<div class="t" style="left:280px;top:420.24px;font-family:'Liberation Serif', serif;font-size:15.0px;line-height:18px;color:#000;font-weight:normal;-webkit-text-stroke:0.12px #000"><span class="d" style="width:8.5px;transform:translateY(3px) scaleY(1.0);transform-origin:50% 14.06px">5</span><span class="d" style="width:8.5px;transform:scaleY(0.8);transform-origin:50% 14.06px">2</span></div>
<div class="t" style="left:379px;top:420.24px;font-family:'Liberation Serif', serif;font-size:15.0px;line-height:18px;color:#000;font-weight:normal;-webkit-text-stroke:0.12px #000"><span class="d" style="width:8.5px;transform:none;transform-origin:50% 14.06px">6</span><span class="d" style="width:8.5px;transform:scaleY(0.8);transform-origin:50% 14.06px">2</span></div>
<div class="t" style="left:481px;top:420.24px;font-family:'Liberation Serif', serif;font-size:15.0px;line-height:18px;color:#000;font-weight:normal;-webkit-text-stroke:0.12px #000"><span class="d" style="width:8.5px;transform:translateY(3px) scaleY(1.0);transform-origin:50% 14.06px">9</span><span class="d" style="width:8.5px;transform:scaleY(0.8);transform-origin:50% 14.06px">1</span></div>
<div class="t" style="left:584px;top:420.24px;font-family:'Liberation Serif', serif;font-size:15.0px;line-height:18px;color:#000;font-weight:normal;-webkit-text-stroke:0.12px #000"><span class="d" style="width:8.5px;transform:translateY(3px) scaleY(1.0);transform-origin:50% 14.06px">7</span><span class="d" style="width:8.5px;transform:translateY(3px) scaleY(1.0);transform-origin:50% 14.06px">7</span></div>
<div class="t" style="left:696px;top:420.24px;font-family:'Liberation Serif', serif;font-size:15.0px;line-height:18px;color:#000;font-weight:bold;"><span class="d" style="width:9.0px;transform:translateY(3px) scaleY(1.09);transform-origin:50% 14.06px">3</span><span class="d" style="width:9.0px;transform:translateY(3px) scaleY(1.09);transform-origin:50% 14.06px">7</span><span class="d" style="width:9.0px;transform:translateY(3px) scaleY(1.09);transform-origin:50% 14.06px">4</span></div>
<div class="t" style="left:29.20px;top:437.57px;font-family:'Liberation Serif', serif;font-size:14.6px;line-height:18px;color:#000;font-weight:normal;letter-spacing:0.379px;-webkit-text-stroke:0.12px #000">SHRUTI</div>
<div class="t" style="left:190px;top:438.24px;font-family:'Liberation Serif', serif;font-size:15.0px;line-height:18px;color:#000;font-weight:normal;-webkit-text-stroke:0.12px #000"><span class="d" style="width:8.5px;transform:translateY(3px) scaleY(1.0);transform-origin:50% 14.06px">5</span><span class="d" style="width:8.5px;transform:translateY(3px) scaleY(1.0);transform-origin:50% 14.06px">9</span></div>
<div class="t" style="left:280px;top:438.24px;font-family:'Liberation Serif', serif;font-size:15.0px;line-height:18px;color:#000;font-weight:normal;-webkit-text-stroke:0.12px #000"><span class="d" style="width:8.5px;transform:translateY(3px) scaleY(1.0);transform-origin:50% 14.06px">4</span><span class="d" style="width:8.5px;transform:translateY(3px) scaleY(1.0);transform-origin:50% 14.06px">9</span></div>
<div class="t" style="left:379px;top:438.24px;font-family:'Liberation Serif', serif;font-size:15.0px;line-height:18px;color:#000;font-weight:normal;-webkit-text-stroke:0.12px #000"><span class="d" style="width:8.5px;transform:translateY(3px) scaleY(1.0);transform-origin:50% 14.06px">7</span><span class="d" style="width:8.5px;transform:scaleY(0.8);transform-origin:50% 14.06px">2</span></div>
<div class="t" style="left:481px;top:438.24px;font-family:'Liberation Serif', serif;font-size:15.0px;line-height:18px;color:#000;font-weight:normal;-webkit-text-stroke:0.12px #000"><span class="d" style="width:8.5px;transform:translateY(3px) scaleY(1.0);transform-origin:50% 14.06px">4</span><span class="d" style="width:8.5px;transform:translateY(3px) scaleY(1.0);transform-origin:50% 14.06px">9</span></div>
<div class="t" style="left:584px;top:438.24px;font-family:'Liberation Serif', serif;font-size:15.0px;line-height:18px;color:#000;font-weight:normal;-webkit-text-stroke:0.12px #000"><span class="d" style="width:8.5px;transform:translateY(3px) scaleY(1.0);transform-origin:50% 14.06px">3</span><span class="d" style="width:8.5px;transform:translateY(3px) scaleY(1.0);transform-origin:50% 14.06px">4</span></div>
<div class="t" style="left:696px;top:438.24px;font-family:'Liberation Serif', serif;font-size:15.0px;line-height:18px;color:#000;font-weight:bold;"><span class="d" style="width:9.0px;transform:scaleY(0.8);transform-origin:50% 14.06px">2</span><span class="d" style="width:9.0px;transform:none;transform-origin:50% 14.06px">6</span><span class="d" style="width:9.0px;transform:translateY(3px) scaleY(1.09);transform-origin:50% 14.06px">3</span></div>
<div class="t" style="left:29.20px;top:455.57px;font-family:'Liberation Serif', serif;font-size:14.6px;line-height:18px;color:#000;font-weight:normal;letter-spacing:0.281px;-webkit-text-stroke:0.12px #000">SHREYA</div>
<div class="t" style="left:190px;top:456.24px;font-family:'Liberation Serif', serif;font-size:15.0px;line-height:18px;color:#000;font-weight:normal;-webkit-text-stroke:0.12px #000"><span class="d" style="width:8.5px;transform:translateY(3px) scaleY(1.0);transform-origin:50% 14.06px">4</span><span class="d" style="width:8.5px;transform:translateY(3px) scaleY(1.0);transform-origin:50% 14.06px">7</span></div>
<div class="t" style="left:280px;top:456.24px;font-family:'Liberation Serif', serif;font-size:15.0px;line-height:18px;color:#000;font-weight:normal;-webkit-text-stroke:0.12px #000"><span class="d" style="width:8.5px;transform:none;transform-origin:50% 14.06px">6</span><span class="d" style="width:8.5px;transform:scaleY(0.8);transform-origin:50% 14.06px">0</span></div>
<div class="t" style="left:379px;top:456.24px;font-family:'Liberation Serif', serif;font-size:15.0px;line-height:18px;color:#000;font-weight:normal;-webkit-text-stroke:0.12px #000"><span class="d" style="width:8.5px;transform:translateY(3px) scaleY(1.0);transform-origin:50% 14.06px">3</span><span class="d" style="width:8.5px;transform:scaleY(0.8);transform-origin:50% 14.06px">1</span></div>
<div class="t" style="left:481px;top:456.24px;font-family:'Liberation Serif', serif;font-size:15.0px;line-height:18px;color:#000;font-weight:normal;-webkit-text-stroke:0.12px #000"><span class="d" style="width:8.5px;transform:none;transform-origin:50% 14.06px">8</span><span class="d" style="width:8.5px;transform:translateY(3px) scaleY(1.0);transform-origin:50% 14.06px">7</span></div>
<div class="t" style="left:584px;top:456.24px;font-family:'Liberation Serif', serif;font-size:15.0px;line-height:18px;color:#000;font-weight:normal;-webkit-text-stroke:0.12px #000"><span class="d" style="width:8.5px;transform:scaleY(0.8);transform-origin:50% 14.06px">1</span><span class="d" style="width:8.5px;transform:translateY(3px) scaleY(1.0);transform-origin:50% 14.06px">7</span></div>
<div class="t" style="left:696px;top:456.24px;font-family:'Liberation Serif', serif;font-size:15.0px;line-height:18px;color:#000;font-weight:bold;"><span class="d" style="width:9.0px;transform:scaleY(0.8);transform-origin:50% 14.06px">2</span><span class="d" style="width:9.0px;transform:translateY(3px) scaleY(1.09);transform-origin:50% 14.06px">4</span><span class="d" style="width:9.0px;transform:scaleY(0.8);transform-origin:50% 14.06px">2</span></div>
<div class="t" style="left:584.20px;top:484.27px;font-family:'Liberation Serif', serif;font-size:15.5px;line-height:19px;color:#000;font-weight:bold;letter-spacing:-0.024px;">AVERAGE =</div>
<div class="t" style="left:696.20px;top:485.07px;font-family:'Liberation Serif', serif;font-size:14.6px;line-height:18px;color:#000;font-weight:normal;letter-spacing:0.018px;-webkit-text-stroke:0.12px #000">=AVERAGE(</div>
<div class="r" style="left:778px;top:485px;width:1px;height:16px;background:#000;"></div>
<div class="r" style="left:691px;top:473px;width:125px;height:37px;border:2px solid #217346"></div>
<div class="r" style="left:816px;top:510px;width:5px;height:5px;background:#217346;outline:1px solid #fff"></div>
<div class="r" style="left:705px;top:515px;width:197px;height:16px;background:#fff;border:1px solid #c4c4c4;box-shadow:1px 2px 3px rgba(0,0,0,0.13)"></div>
<div class="t" style="left:711.00px;top:515.26px;font-family:'Liberation Sans', sans-serif;font-size:12.8px;line-height:15px;color:#595959;font-weight:normal;letter-spacing:-0.65px">AVERAGE(<b style="color:#444">number1</b>, [number2], ...)</div>
<svg class="r" style="left:0;top:0" width="925" height="549" viewBox="0 0 925 549"><rect x="22" y="10" width="14" height="14" fill="#fff"/><rect x="24" y="11" width="10" height="5.8" fill="#217346"/><rect x="25" y="18.8" width="8" height="3.9" fill="#217346"/><rect x="27" y="21" width="2" height="2" fill="#fff"/><g fill="none" stroke="#fff" stroke-width="2" stroke-linejoin="miter"><path d="M55.5 10.3 L52 13.8 L55.5 17.3"/><path d="M52 13.8 H58.5 A4.3 4.3 0 0 1 58.5 22.4 H58"/></g><path d="M71 15h5l-2.5 3z" fill="#fff"/><g fill="none" stroke="#6fa888" stroke-width="2"><path d="M96.5 10.3 L100 13.8 L96.5 17.3"/><path d="M100 13.8 H91.5 A4.3 4.3 0 0 0 91.5 22.4 H92"/></g><path d="M107 15h5l-2.5 3z" fill="#6fa888"/><rect x="126.7" y="14" width="5.3" height="1.2" fill="#fff"/><path d="M126.7 16.7h5.3l-2.65 3.6z" fill="#fff"/><g fill="none" stroke="#fff" stroke-width="1.2"><path d="M661.5 53 C661.5 50 659.2 49 659.2 46 A5.2 5.2 0 0 1 669.6 46 C669.6 49 667.3 50 667.3 53 Z"/><path d="M662 55.2 H667"/><path d="M663 57 H666"/></g><rect x="17" y="74.7" width="24" height="25.2" rx="1.2" fill="#eac47a"/><path d="M21.5 74.2 h15 v5.4 h-15z" fill="#f3f3f3"/><rect x="22.2" y="75" width="13.8" height="3.9" fill="#747474"/><rect x="26" y="72" width="6" height="4" rx="1" fill="#747474"/><circle cx="29" cy="74.3" r="1" fill="#fff"/><path d="M29.8 81.8 h10 l6.4 6 v15 h-16.4z" fill="#f3f3f3"/><path d="M31.3 83.3 h8.2 l5.2 5 v13 h-13.4z" fill="#fff" stroke="#787878" stroke-width="1.1"/><path d="M39.5 83.3 v5 h5.2" fill="none" stroke="#787878" stroke-width="1.1"/><path d="M26 127.2h5l-2.5 2.8z" fill="#555"/><g stroke="#6d6d6d" stroke-width="1.6" fill="none" stroke-linecap="round"><path d="M57.3 70.8 L63.3 80"/><path d="M64.6 70.8 L58.6 80"/></g><g stroke="#3f7dc6" stroke-width="1.1" fill="none"><circle cx="56.9" cy="82.1" r="2.4"/><circle cx="64.9" cy="82.1" r="2.4"/></g><g stroke="#6b6b6b" stroke-width="1.05" fill="#fff"><path d="M53.6 94.6 h5.4 l1.6 1.6 v8.2 h-7z"/><path d="M59.6 97.6 h5 l2.9 2.9 v7 h-7.9z"/></g><g fill="#2f6db5"><rect x="55" y="97" width="2" height="1"/><rect x="55" y="99" width="3" height="1"/><rect x="55" y="101" width="3" height="1"/><rect x="61" y="100" width="2" height="1"/><rect x="61" y="102" width="5" height="1"/><rect x="61" y="104" width="5" height="1"/></g><path d="M110 100.5h5l-2.5 2.8z" fill="#555"/><path d="M64.9 118.9 L67 116.9 L69 118.7 L66.8 120.9z" fill="#aaaaaa"/><path d="M59.2 120.4 L60.9 118.9 L66.8 123.7 L65.1 125.7z" fill="#aaaaaa"/><path d="M53.3 123.3 L57.6 121.6 L63.8 126.6 L60 130.7z" fill="#d8d4d6"/><g fill="none" stroke="#8a8a8a" stroke-width="1"><path d="M153.5 151 V144.5 H160"/><path d="M155.5 146.5 L160 151 M160 147.5 V151 H156.5"/></g><g fill="none" stroke="#8a8a8a" stroke-width="1"><path d="M368.0 151 V144.5 H374.5"/><path d="M370.0 146.5 L374.5 151 M374.5 147.5 V151 H371.0"/></g><g fill="none" stroke="#8a8a8a" stroke-width="1"><path d="M639.0 151 V144.5 H645.5"/><path d="M641.0 146.5 L645.5 151 M645.5 147.5 V151 H642.0"/></g><g fill="none" stroke="#8a8a8a" stroke-width="1"><path d="M786.0 151 V144.5 H792.5"/><path d="M788.0 146.5 L792.5 151 M792.5 147.5 V151 H789.0"/></g><path d="M274.2 85h4.8l-2.4 2.5z" fill="#a3a3a3"/><path d="M317.2 85h4.8l-2.4 2.5z" fill="#a3a3a3"/><path d="M778.5 85.5h5l-2.5 2.5z" fill="#a3a3a3"/><text x="333.4" y="91.8" font-family="Liberation Sans" font-size="13.5" fill="#9e9e9e">A</text><path d="M341 82h5l-2.5-2.8z" fill="#a3a3a3"/><text x="356" y="91.8" font-family="Liberation Sans" font-size="10.5" fill="#9e9e9e">A</text><path d="M363.2 79.2h5l-2.5 2.8z" fill="#a3a3a3"/><text x="179.2" y="121.2" font-family="Liberation Sans" font-weight="bold" font-size="12" fill="#9e9e9e">B</text><text x="201.5" y="121.2" font-family="Liberation Serif" font-style="italic" font-weight="bold" font-size="13" fill="#9e9e9e">I</text><text x="223.2" y="121.2" font-family="Liberation Sans" font-weight="bold" font-size="12" fill="#9e9e9e">U</text><rect x="223" y="122.2" width="9" height="1.1" fill="#9e9e9e"/><path d="M241.7 116.2h5l-2.5 2.5z" fill="#a3a3a3"/><path d="M284.8 116.2h5l-2.5 2.5z" fill="#a3a3a3"/><path d="M328 116.2h5l-2.5 2.5z" fill="#a3a3a3"/><path d="M362 116.2h5l-2.5 2.5z" fill="#a3a3a3"/><path d="M683 116.2h5l-2.5 2.5z" fill="#a3a3a3"/><rect x="255" y="107" width="1" height="21" fill="#c8c8c8"/><rect x="298" y="107" width="1" height="21" fill="#c8c8c8"/><rect x="457" y="76" width="1" height="21" fill="#c8c8c8"/><rect x="457" y="107" width="1" height="21" fill="#c8c8c8"/><rect x="510" y="74" width="1" height="54" fill="#c8c8c8"/><rect x="740" y="107" width="1" height="21" fill="#c8c8c8"/><rect x="264" y="110" width="13" height="12" fill="#f6f1f5"/><g fill="#a6a6a6"><rect x="264" y="110" width="1" height="1"/><rect x="264" y="112" width="1" height="1"/><rect x="264" y="114" width="1" height="1"/><rect x="264" y="116" width="1" height="1"/><rect x="264" y="118" width="1" height="1"/><rect x="264" y="120" width="1" height="1"/><rect x="266" y="110" width="1" height="1"/><rect x="266" y="116" width="1" height="1"/><rect x="268" y="110" width="1" height="1"/><rect x="268" y="116" width="1" height="1"/><rect x="270" y="110" width="1" height="1"/><rect x="270" y="112" width="1" height="1"/><rect x="270" y="114" width="1" height="1"/><rect x="270" y="116" width="1" height="1"/><rect x="270" y="118" width="1" height="1"/><rect x="270" y="120" width="1" height="1"/><rect x="272" y="110" width="1" height="1"/><rect x="272" y="116" width="1" height="1"/><rect x="274" y="110" width="1" height="1"/><rect x="274" y="116" width="1" height="1"/><rect x="276" y="110" width="1" height="1"/><rect x="276" y="112" width="1" height="1"/><rect x="276" y="114" width="1" height="1"/><rect x="276" y="116" width="1" height="1"/><rect x="276" y="118" width="1" height="1"/><rect x="276" y="120" width="1" height="1"/></g><rect x="264" y="122" width="13" height="1.2" fill="#a0a0a0"/><rect x="306" y="121" width="16" height="3.8" fill="#e6e0e4"/><path d="M308 116.3 L313.3 111 L319.6 116.6 L313.9 121.7 Z" fill="#f6f1f5" stroke="#a0a0a0" stroke-width="1.1"/><path d="M311.6 113 V110.2 Q311.6 109.3 312.5 109.3 H313.3 Q314.2 109.3 314.2 110.2 V115" fill="none" stroke="#a0a0a0" stroke-width="1.1"/><path d="M318.6 113.4 C321 113 322.6 115 322.2 119.6 L320 117.4 Z" fill="#a0a0a0"/><text x="342.8" y="121.9" font-family="Liberation Sans" font-weight="bold" font-size="15" fill="#a3a3a3">A</text><g fill="#9d9d9d"><rect x="391" y="78.0" width="14.0" height="1.2"/><rect x="391" y="81.3" width="14.0" height="1.2"/><rect x="391" y="84.4" width="14.0" height="1.2"/><rect x="413" y="81.8" width="14.0" height="1.2"/><rect x="413" y="85.0" width="14.0" height="1.2"/><rect x="413" y="88.3" width="14.0" height="1.2"/><rect x="435" y="86.7" width="14.0" height="1.2"/><rect x="435" y="90.0" width="14.0" height="1.2"/><rect x="435" y="93.2" width="14.0" height="1.2"/></g><g fill="#9d9d9d"><rect x="391" y="111.9" width="14.0" height="1.2"/><rect x="391" y="115.0" width="10.0" height="1.2"/><rect x="391" y="118.0" width="14.0" height="1.2"/><rect x="391" y="121.1" width="10.0" height="1.2"/><rect x="413" y="111.9" width="14.0" height="1.2"/><rect x="415" y="115.0" width="10.0" height="1.2"/><rect x="413" y="118.0" width="14.0" height="1.2"/><rect x="415" y="121.1" width="10.0" height="1.2"/><rect x="435" y="111.9" width="14.0" height="1.2"/><rect x="439" y="115.0" width="10.0" height="1.2"/><rect x="435" y="118.0" width="14.0" height="1.2"/><rect x="439" y="121.1" width="10.0" height="1.2"/></g><g fill="#a3a3a3"><rect x="465" y="110.0" width="16.0" height="1.2"/><rect x="465" y="122.0" width="16.0" height="1.2"/><rect x="472.8" y="113.3" width="8.2" height="1.2"/><rect x="472.8" y="116.2" width="8.2" height="1.2"/><rect x="472.8" y="119.0" width="8.2" height="1.2"/><rect x="487.2" y="110.0" width="15.8" height="1.2"/><rect x="487.2" y="122.0" width="15.8" height="1.2"/><rect x="495" y="113.3" width="8.0" height="1.2"/><rect x="495" y="116.2" width="8.0" height="1.2"/><rect x="495" y="119.0" width="8.0" height="1.2"/></g><g fill="none" stroke="#a3a3a3" stroke-width="1.6"><path d="M471 116.4 H466 M468.5 113.6 L465.8 116.4 L468.5 119.2"/><path d="M488 116.4 H493 M490.5 113.6 L493.2 116.4 L490.5 119.2"/></g><text x="0" y="0" font-family="Liberation Sans" font-weight="bold" font-size="11" fill="#a3a3a3" transform="translate(468 91) rotate(-45)">ab</text><g stroke="#a0a0a0" stroke-width="1.2" fill="none"><path d="M471.4 92.4 L481.3 82.5 M477.6 82.6 H481.2 V86.2"/></g><path d="M484.6 85.2h5.4l-2.7 2.6z" fill="#a3a3a3"/><text x="519.6" y="85.8" font-family="Liberation Sans" font-weight="bold" font-size="10" fill="#a3a3a3">ab</text><text x="519.6" y="93" font-family="Liberation Sans" font-weight="bold" font-size="10" fill="#a3a3a3">c</text><g stroke="#a0a0a0" stroke-width="1" fill="none"><path d="M531 87.8 V90.3 H527.5 M529 88.8 L527.3 90.3 L529 91.8"/></g><g fill="none" stroke="#b4a9af" stroke-width="1"><rect x="518.5" y="109.5" width="14" height="14"/><path d="M518.5 112.8 H532.5 M518.5 120.3 H532.5 M525.5 109.5 V112.8 M525.5 120.3 V123.5"/><path d="M520.5 116.5 H530.5 M522 115 L520.5 116.5 L522 118 M529 115 L530.5 116.5 L529 118"/></g><path d="M632.2 116.3h4.8l-2.4 2.5z" fill="#a3a3a3"/><rect x="661" y="108.8" width="16" height="9.2" fill="#a8a8a8"/><path d="M663.5 110.3 H674.5 L675.7 111.5 V115.6 L674.5 116.7 H663.5 L662.3 115.6 V111.5 Z" fill="#f6f0f4"/><circle cx="668.8" cy="113.3" r="2.1" fill="#a8a8a8"/><g fill="#d8d2d6" stroke="#f3f3f3" stroke-width="0.8"><rect x="669.6" y="114.6" width="8" height="3.2" rx="1.4"/><rect x="664.4" y="119.6" width="8" height="3.2" rx="1.4"/></g><g fill="#d8d2d6"><rect x="672.5" y="118.6" width="4.4" height="1"/><rect x="673.2" y="120.8" width="4" height="1"/><rect x="666" y="123.6" width="5.5" height="1.2"/></g><text x="696.6" y="122.7" font-family="Liberation Sans" font-weight="bold" font-size="14.5" fill="#a3a3a3">%</text><circle cx="724.9" cy="115.4" r="1.9" fill="#a3a3a3"/><path d="M726.8 115.6 C726.8 117.6 725.2 119.3 722.9 120 L722.5 119.2 C723.9 118.5 724.8 117.5 724.9 116.3 Z" fill="#a3a3a3"/><g font-family="Liberation Sans" font-weight="bold" font-size="9" fill="#a3a3a3"><text x="754.2" y="116">.0</text><text x="750.8" y="123">.00</text><text x="772.3" y="116">.00</text><text x="776" y="123">.0</text></g><g stroke="#a3a3a3" stroke-width="1.3" fill="none"><path d="M748.8 113.4 H754.3 M751.2 111 L748.8 113.4 L751.2 115.8"/><path d="M769.8 120.4 H775.6 M773.2 118 L775.6 120.4 L773.2 122.8"/></g><rect x="827.7" y="72.6" width="27.2" height="24.4" fill="#f6f0f4"/><g fill="#b0b0b0"><rect x="834.5" y="72.6" width="6" height="6.1"/><rect x="834.5" y="78.7" width="11.2" height="6.1"/><rect x="834.5" y="84.8" width="8.5" height="6.1"/><rect x="834.5" y="90.9" width="4.4" height="6.1"/></g><g stroke="#c2c2c2" stroke-width="1" fill="none"><path d="M827.7 72.6 V97"/><path d="M834.5 72.6 V97"/><path d="M841.3 72.6 V97"/><path d="M848.1 72.6 V97"/><path d="M854.9 72.6 V97"/><path d="M827.7 72.6 H854.9"/><path d="M827.7 78.7 H854.9"/><path d="M827.7 84.8 H854.9"/><path d="M827.7 90.9 H854.9"/><path d="M827.7 97.0 H854.9"/></g><rect x="841.8" y="89.6" width="14.4" height="11.4" fill="#f6f0f4" stroke="#a8a8a8" stroke-width="1.4"/><g stroke="#8f8f8f" stroke-width="1.1"><path d="M845.5 93.8 H852.5 M845.5 96.6 H852.5 M851 91.6 L847 98.8"/></g><path d="M869.4 127.3h4.4l-2.2 2.2z" fill="#a3a3a3"/><rect x="892.5" y="74.3" width="24.4" height="20.4" fill="#f6f0f4"/><rect x="898.6" y="79.4" width="18.3" height="15.3" fill="#dcd7da"/><g stroke="#bababa" stroke-width="1" fill="none"><path d="M892.5 74.3 V94.7"/><path d="M898.6 74.3 V94.7"/><path d="M904.7 74.3 V94.7"/><path d="M910.8 74.3 V94.7"/><path d="M916.9 74.3 V94.7"/><path d="M892.5 74.3 H916.9"/><path d="M892.5 79.4 H916.9"/><path d="M892.5 84.5 H916.9"/><path d="M892.5 89.6 H916.9"/><path d="M892.5 94.7 H916.9"/></g><path d="M900 101 L921.5 80" stroke="#f3f3f3" stroke-width="9" stroke-linecap="round"/><g fill="#b0b0b0"><path d="M921 79.8 V86.7 L915.3 91.6 L912.9 89.2 Z"/><path d="M911.8 90 L914.2 92.4 L911 95.4 L908.6 93 Z"/><path d="M898.5 102 C902 98.5 905 94.6 908 94 C911 93.6 912.6 96.2 911 98.6 C909 101.6 903 102.2 898.5 102 Z"/></g><ellipse cx="907.6" cy="95.6" rx="2.3" ry="1.2" transform="rotate(-40 907.6 95.6)" fill="#f6f0f4"/><path d="M918.3 127.3h4.4l-2.2 2.2z" fill="#a3a3a3"/><path d="M92.8 176.8h7.4l-3.7 3.6z" fill="#6a6a6a"/><g fill="#a6a6a6"><rect x="121" y="175" width="2" height="2"/><rect x="121" y="179" width="2" height="2"/><rect x="121" y="183" width="2" height="2"/></g><g stroke="#737373" stroke-width="1.7" fill="none"><path d="M151.4 175.8 L161 184.6 M161 175.8 L151.4 184.6"/></g><path d="M186.5 179.8 L191 184 L198.6 175.6" stroke="#777" stroke-width="2.4" fill="none"/><g fill="none" stroke="#707070" stroke-linecap="round"><path d="M230.6 174.6 C229 173.6 227.6 174.4 227.2 176.4 L225.4 184 C225 185.6 223.9 185.9 222.8 185.3" stroke-width="1.5"/><path d="M225.2 178.6 H229.6" stroke-width="1.2"/><path d="M227.4 179.2 C228.6 179 229.4 179.6 230 181 L231.2 183 C231.8 183.9 232.8 184.1 234 183.5 M233.8 179.2 C232.6 179.6 231.2 181.2 230.2 182.6 C229.4 183.6 228.4 184 227.6 183.6" stroke-width="1.3"/></g><path d="M70.9 15h0" /></svg>
<svg class="r" style="left:0;top:0" width="925" height="549" viewBox="0 0 925 549"><g fill="none" stroke="#22dd00" stroke-width="4" stroke-linecap="round" stroke-linejoin="round"><path d="M780 357.8 L780 432.5"/><path d="M771 405 L780 431 L790 402"/><path d="M246.2 150.9 V204.1 M246.2 153 H345.8 M344 150.1 V204.8 M246.2 204.5 H346"/></g></svg>
</body></html>
